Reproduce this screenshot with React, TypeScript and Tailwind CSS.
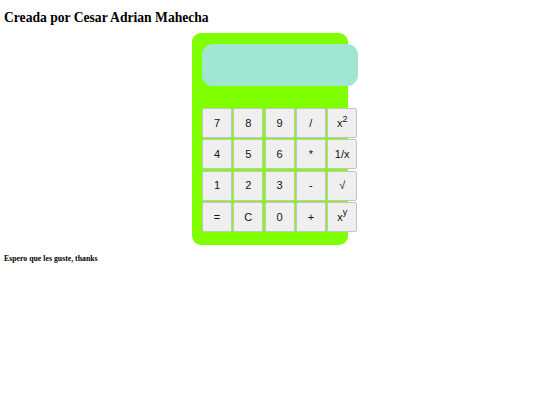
const keys: { label: React.ReactNode }[] = [
  { label: '7' }, { label: '8' }, { label: '9' }, { label: '/' }, { label: <>x<sup className="text-[9px]">2</sup></> },
  { label: '4' }, { label: '5' }, { label: '6' }, { label: '*' }, { label: '1/x' },
  { label: '1' }, { label: '2' }, { label: '3' }, { label: '-' }, { label: '√' },
  { label: '=' }, { label: 'C' }, { label: '0' }, { label: '+' }, { label: <>x<sup className="text-[9px]">y</sup></> },
];

export default function App() {
  return (
    <div className="min-h-screen bg-white text-black" style={{ fontFamily: '"Liberation Serif", serif' }}>
      <h2 className="pl-[4px] pt-[10px] text-[13.6px] font-bold leading-[16px]">Creada por Cesar Adrian Mahecha</h2>

      <div className="mx-auto mt-[7px] w-[156px] rounded-[9px] bg-[#7fff00] pb-[13px] pl-[10px] pt-[11px]">
        <div className="h-[42px] w-[156px] rounded-[11px] bg-[#a1e6d3]" />
        <div className="mt-[22px] grid w-[156px] grid-cols-[repeat(5,30px)] gap-x-[1.3px] gap-y-[1.3px]">
          {keys.map((k, i) => (
            <button
              key={i}
              className="flex h-[30px] w-[30px] items-center justify-center rounded-[2px] border border-[#c4c4c4] bg-[#efefef] text-[11px] text-[#111]"
              style={{ fontFamily: '"Liberation Sans", Arial, sans-serif' }}
            >
              {k.label}
            </button>
          ))}
        </div>
      </div>

      <h5 className="pl-[4px] pt-[8px] text-[7.8px] font-bold">Espero que les guste, thanks</h5>
    </div>
  );
}
